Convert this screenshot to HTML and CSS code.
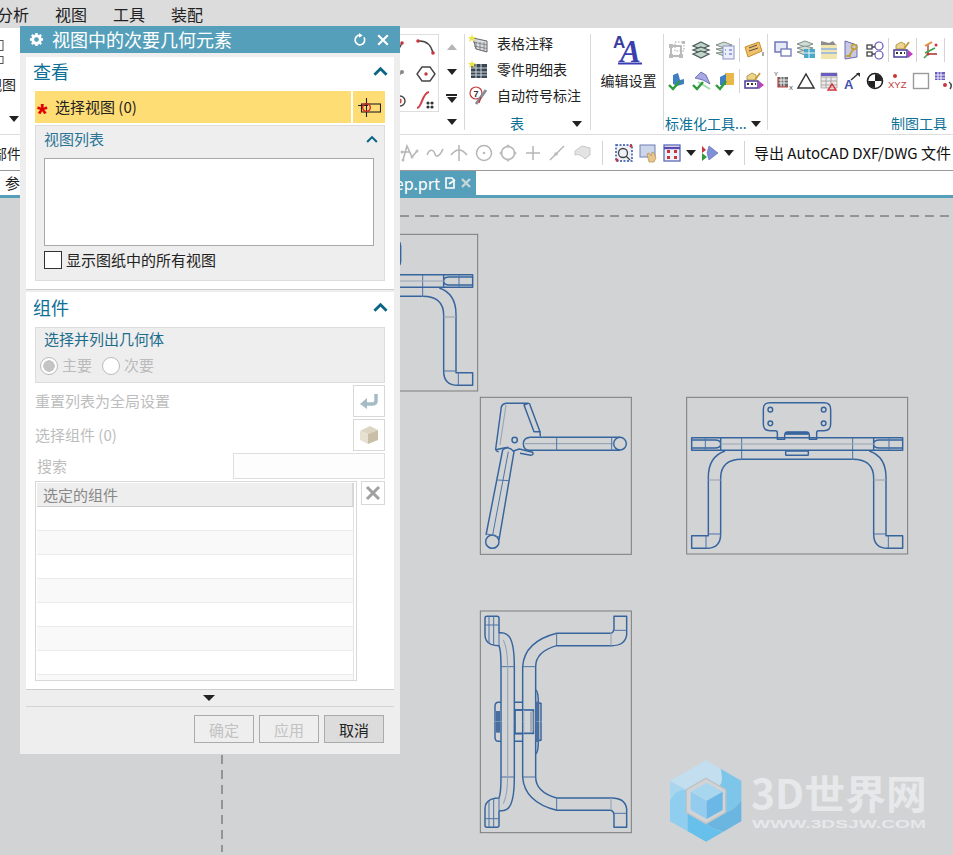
FILE: index.html
```html
<!DOCTYPE html>
<html lang="zh-CN">
<head>
<meta charset="utf-8">
<title>视图中的次要几何元素</title>
<link rel="stylesheet" href="styles.css">
</head>
<body>
<div class="app">
  <nav class="menubar">
    <span class="menu-item first">分析</span>
    <span class="menu-item">视图</span>
    <span class="menu-item">工具</span>
    <span class="menu-item">装配</span>
  </nav>

  <section class="ribbon">
    <div class="group g-left">
      <svg class="mini" viewBox="0 0 5 24"><rect x="-4" y=".5" width="7" height="10"/><rect x="-4" y="16.5" width="7" height="7"/></svg>
      <span class="mini-label">视图</span>
      <i class="caret caret-left"></i>
    </div>

    <div class="group g-sketch">
      <div class="sketch-box">
        <svg class="ic" viewBox="0 0 20 20"><path d="M2 17Q8 12 11 5" class="l-dark"/><circle cx="11" cy="5" r="1.8" class="f-red"/></svg>
        <svg class="ic" viewBox="0 0 20 20"><path d="M2 3Q14 2 17 15" class="l-dark"/><circle cx="2" cy="3" r="1.8" class="f-red"/><circle cx="17" cy="15" r="1.8" class="f-red"/></svg>
        <svg class="ic" viewBox="0 0 20 20"><path d="M5 15L11 8" class="l-gray"/><circle cx="5" cy="15" r="2" class="f-red"/><circle cx="11" cy="8" r="2" class="f-gray"/></svg>
        <svg class="ic" viewBox="0 0 20 20"><path d="M6 3H14L19 10 14 17H6L1 10Z" class="l-dark"/><circle cx="10" cy="10" r="1.7" class="f-red"/></svg>
        <svg class="ic" viewBox="0 0 20 20"><circle cx="9" cy="11" r="5" class="l-dark"/><circle cx="8" cy="11" r="2" class="l-red"/></svg>
        <svg class="ic" viewBox="0 0 20 20"><path d="M1 18C6 18 6 3 13 2" class="l-red2"/><g class="f-dark"><circle cx="12" cy="13" r="1.6"/><circle cx="16" cy="13" r="1.6"/><circle cx="12" cy="17" r="1.6"/><circle cx="16" cy="17" r="1.6"/></g></svg>
      </div>
      <div class="scroll-col">
        <i class="caret caret-up"></i>
        <i class="caret"></i>
        <span class="bar-caret"><b></b><i class="caret"></i></span>
        <i class="caret"></i>
      </div>
    </div>

    <div class="group g-table">
      <div class="list-row">
        <svg class="ic" viewBox="0 0 20 20"><path d="M5 4L19 7V18L8 15Z" class="grid-fill"/><path d="M8 7.5L8 15M12 8V16M16 8V17M5 8L19 11M6 12L19 14.500" class="l-thin"/><path d="M4 0L5 3 8 3 6 5 7 8 4 6 1 8 2 5 0 3 3 3Z" class="f-star"/></svg>
        <span>表格注释</span>
      </div>
      <div class="list-row">
        <svg class="ic" viewBox="0 0 20 20"><rect x="3" y="4" width="16" height="14" class="grid-dark"/><path d="M3 8H19M3 12H19M3 15H19M8 4V18M13 4V18" class="l-light"/><path d="M4 0L5 3 8 3 6 5 7 8 4 6 1 8 2 5 0 3 3 3Z" class="f-star"/></svg>
        <span>零件明细表</span>
      </div>
      <div class="list-row">
        <svg class="ic" viewBox="0 0 20 20"><circle cx="8" cy="7" r="6" class="l-redthin"/><text x="5.500" y="10.500" class="num">7</text><path d="M18 4L8 18" class="l-pen"/><path d="M13 11L11 17" class="l-redthin"/></svg>
        <span>自动符号标注</span>
      </div>
      <div class="group-label label-table"><span>表</span><i class="caret"></i></div>
    </div>

    <div class="group g-edit">
      <svg class="big-a" viewBox="0 0 32 30">
        <text x="0" y="12" class="big-a-s">A</text>
        <text x="7" y="26" class="big-a-l">A</text>
        <path d="M5 27.500H29" class="big-a-line"/>
      </svg>
      <span class="edit-label">编辑设置</span>
    </div>

    <div class="group g-std">
      <div class="icon-row">
        <svg class="ic" viewBox="0 0 20 20"><rect x="4" y="6" width="10" height="10" class="l-gray-2"/><rect x="8" y="2" width="9" height="9" class="l-gray-dash"/><g class="f-gray2"><rect x="2" y="4" width="4" height="4"/><rect x="12" y="14" width="4" height="4"/><rect x="15" y="1" width="3" height="3"/><rect x="2" y="14" width="4" height="4"/></g></svg>
        <svg class="ic" viewBox="0 0 20 20"><g class="stack"><path d="M10 2L18 6 10 9 2 6Z"/><path d="M10 7L18 10 10 13 2 10Z"/><path d="M10 11L18 14 10 18 2 14Z"/></g></svg>
        <svg class="ic" viewBox="0 0 20 20"><g class="stack2"><path d="M9 2L17 5 9 8 1 5Z"/><path d="M9 8L14 10 9 12 1 9Z"/><path d="M9 12L14 14 9 16 1 13Z"/></g><rect x="8" y="6" width="11" height="13" class="sheet"/><path d="M10 10H11M14 10H17M10 14H11M14 14H17" class="l-blue"/></svg>
        <i class="vsep"></i>
        <svg class="ic" viewBox="0 0 20 20"><path d="M1 7L15 2 18 11 4 17Z" class="tag"/><path d="M5 8L13 5M5 11L14 8" class="l-darkthin"/><path d="M19 12V16" class="l-darkthin"/></svg>
      </div>
      <div class="icon-row">
        <svg class="ic" viewBox="0 0 20 20"><path d="M6 4L11 2 13 9 17 8 17 13 10 15 6 13Z" class="f-blue"/><path d="M2 14L6 18 13 10" class="l-check"/></svg>
        <svg class="ic" viewBox="0 0 20 20"><path d="M4 7L10 1 15 4 19 13 12 9Z" class="f-lilac"/><path d="M7 11L19 18" class="l-mint"/><path d="M2 14L6 18 12 11" class="l-check"/></svg>
        <svg class="ic" viewBox="0 0 20 20"><rect x="10" y="2" width="9" height="12" class="f-gold"/><path d="M5 6L11 3V14L5 14Z" class="f-blue"/><path d="M1 14L5 18 11 10" class="l-check"/></svg>
        <i class="vsep"></i>
        <svg class="ic" viewBox="0 0 20 20"><path d="M3 5L8 2 12 4V9H3Z" class="f-cube"/><rect x="1" y="10" width="13" height="7" class="l-purple"/><path d="M3 13H5M7 13H9M11 13H12" class="l-dark2"/><path d="M15 10L20 14 15 18Z" class="f-magenta"/><path d="M11 9L16 2" class="l-pencil"/></svg>
      </div>
      <div class="group-label label-std"><span>标准化工具...</span><i class="caret"></i></div>
    </div>

    <div class="group g-draft">
      <div class="icon-row">
        <svg class="ic" viewBox="0 0 20 20"><rect x="2" y="2" width="12" height="10" class="win"/><rect x="8" y="9" width="10" height="7" class="win2"/></svg>
        <svg class="ic" viewBox="0 0 20 20"><g class="stack2"><path d="M9 1L17 4 9 7 1 4Z"/><path d="M9 6L17 8 9 11 1 8Z"/><path d="M9 10L17 12 9 15 1 12Z"/></g><rect x="8" y="9" width="11" height="9" class="f-cyan"/><path d="M8 13H19M13 9V18" class="l-white"/></svg>
        <svg class="ic" viewBox="0 0 20 20"><rect x="2" y="4" width="16" height="15" class="f-paleY"/><path d="M2 9H18M2 13H18" class="l-palebl"/><path d="M2 1L10 3 14 1 17 5H2Z" class="f-gray3"/></svg>
        <svg class="ic" viewBox="0 0 20 20"><path d="M3 1L15 5V17L3 19Z" class="f-lav"/><path d="M7 16L12 8" class="l-gold"/><circle cx="12" cy="7" r="2.500" class="l-gold2"/><path d="M4 16H9" class="l-gold"/></svg>
        <svg class="ic" viewBox="0 0 20 20"><rect x="2" y="5" width="5" height="4" class="l-dk"/><rect x="2" y="12" width="5" height="4" class="l-dk"/><path d="M7 7H11M7 14H11" class="l-dk"/><circle cx="14" cy="6" r="4" class="l-pur"/><circle cx="14" cy="15" r="4" class="l-pur"/></svg>
        <i class="vsep"></i>
        <svg class="ic" viewBox="0 0 20 20"><path d="M3 5L8 2 12 4V9H3Z" class="f-cube"/><rect x="1" y="10" width="13" height="7" class="l-purple"/><path d="M3 13H5M7 13H9M11 13H12" class="l-dark2"/><path d="M15 10L20 14 15 18Z" class="f-magenta"/><path d="M11 9L16 2" class="l-pencil"/></svg>
        <i class="vsep"></i>
        <svg class="ic" viewBox="0 0 20 20"><path d="M7 4V14H16" class="l-dkred"/><path d="M7 14L3 18" class="l-green"/><path d="M4 6L11 2" class="l-orange"/><path d="M4 13L14 8" class="l-green"/><circle cx="7" cy="14" r="1.500" class="f-red"/><circle cx="15" cy="5" r="1.500" class="f-red"/></svg>
        <i class="vsep"></i>
      </div>
      <div class="icon-row">
        <svg class="ic" viewBox="0 0 20 20"><rect x="5" y="6" width="10" height="10" class="f-gridk"/><path d="M5 9H15M5 12H15M8 6V16M11 6V16" class="l-white"/><path d="M5 6V16H15" class="l-redthin"/><text x="1" y="5" class="tiny">Y</text><text x="16" y="19" class="tiny">X</text></svg>
        <svg class="ic" viewBox="0 0 20 20"><path d="M10 3L18 17H2Z" class="l-dark3"/></svg>
        <svg class="ic" viewBox="0 0 20 20"><rect x="2" y="2" width="16" height="15" class="f-paleG"/><path d="M2 6H18M2 10H18M2 14H18M7 6V17M12 6V17" class="l-gr"/><rect x="2" y="2" width="16" height="3" class="f-pur"/><path d="M13 13L17 19H9Z" class="tri-red"/></svg>
        <svg class="ic" viewBox="0 0 20 20"><text x="2" y="18" class="a-blue">A</text><path d="M9 9L17 2" class="l-dark3"/><path d="M14 2H18V6Z" class="f-dark"/></svg>
        <svg class="ic" viewBox="0 0 20 20"><circle cx="10" cy="10" r="7.500" class="l-black"/><path d="M10 3A7 7 0 0 1 17 10H10Z M10 10H3A7 7 0 0 0 10 17Z" class="f-black"/></svg>
        <svg class="ic" viewBox="0 0 20 20"><circle cx="7" cy="5" r="2" class="f-red"/><text x="0" y="17" class="xyz">XYZ</text></svg>
        <svg class="ic" viewBox="0 0 20 20"><rect x="2.500" y="2.500" width="15" height="15" class="l-box"/></svg>
        <svg class="ic" viewBox="0 0 20 20"><rect x="1" y="1" width="10" height="8" class="f-pur"/><path d="M1 4H11M1 7H11M4 1V9M7 1V9" class="l-white"/><circle cx="11" cy="14" r="2" class="f-red"/><path d="M15 11Q19 14 16 18" class="l-dark"/></svg>
      </div>
      <div class="group-label label-draft"><span>制图工具</span></div>
    </div>
  </section>

  <section class="toolbar">
    <div class="tool-left"><span>部件</span></div>
    <svg class="ic tool" viewBox="0 0 20 20"><path d="M3 17L7 3 12 14 17 8" class="l-tool"/><path d="M2 9H10" class="l-tool"/><g class="f-tool"><circle cx="3" cy="17" r="1.500"/><circle cx="12" cy="14" r="1.500"/><circle cx="17" cy="8" r="1.500"/><circle cx="2" cy="9" r="1.500"/></g></svg>
    <svg class="ic tool" viewBox="0 0 20 20"><path d="M2 12C5 5 9 7 10 11S15 13 18 6" class="l-tool"/></svg>
    <svg class="ic tool" viewBox="0 0 20 20"><path d="M10 2V18M2 12Q10 2 18 12" class="l-tool"/></svg>
    <svg class="ic tool" viewBox="0 0 20 20"><circle cx="10" cy="10" r="7.500" class="l-tool"/><circle cx="10" cy="10" r="1.300" class="f-tool"/></svg>
    <svg class="ic tool" viewBox="0 0 20 20"><circle cx="10" cy="10" r="6.500" class="l-tool"/><g class="f-tool"><circle cx="10" cy="3" r="1.500"/><circle cx="10" cy="17" r="1.500"/><circle cx="3" cy="10" r="1.500"/><circle cx="17" cy="10" r="1.500"/></g></svg>
    <svg class="ic tool" viewBox="0 0 20 20"><path d="M10 3V17M3 10H17" class="l-tool"/></svg>
    <svg class="ic tool" viewBox="0 0 20 20"><path d="M3 17L17 3" class="l-tool"/><circle cx="9" cy="11" r="1.800" class="f-tool"/></svg>
    <svg class="ic tool" viewBox="0 0 20 20"><path d="M3 8L10 3 18 5V12L13 16Q8 10 3 12Z" class="f-shade"/></svg>
    <i class="vsep tall"></i>
    <svg class="ic tool-c first" viewBox="0 0 20 20"><rect x="2" y="2" width="16" height="16" class="l-bluedash"/><circle cx="9" cy="10" r="4.500" class="l-dk"/><path d="M12 13L16 17" class="l-dk"/><circle cx="17" cy="3" r="1.500" class="f-red"/><circle cx="3" cy="17" r="1.500" class="f-red"/></svg>
    <svg class="ic tool-c" viewBox="0 0 20 20"><rect x="2" y="2" width="15" height="12" class="f-panel"/><path d="M11 19L9 11 11 10 13 13 14 9 16 10 18 15 16 19Z" class="f-hand"/></svg>
    <svg class="ic tool-c" viewBox="0 0 20 20"><rect x="2" y="2" width="16" height="16" class="win3"/><path d="M2 5H18" class="l-pur2"/><g class="f-red"><rect x="5" y="7" width="3" height="3"/><rect x="12" y="7" width="3" height="3"/><rect x="5" y="13" width="3" height="3"/><rect x="12" y="13" width="3" height="3"/></g></svg>
    <i class="caret tool-caret"></i>
    <svg class="ic tool-c" viewBox="0 0 20 20"><path d="M9 3L18 10 9 17 7 10Z" class="f-lilac2"/><path d="M2 3V10L6 7Z" class="f-red"/><path d="M2 10V18L7 14Z" class="f-green"/></svg>
    <i class="caret tool-caret"></i>
    <i class="vsep tall"></i>
    <span class="export">导出 AutoCAD DXF/DWG 文件</span>
  </section>

  <section class="tabs">
    <div class="tab-left">参</div>
    <div class="tab">
      <span class="tab-name">ep.prt</span>
      <svg class="tab-ic" viewBox="0 0 12 12"><path d="M2 1H8L10 3V11H2Z" class="tab-page"/><path d="M5 7L11 3" class="tab-pen"/></svg>
      <svg class="tab-ic" viewBox="0 0 12 12"><path d="M2 2L10 10M10 2L2 10" class="tab-x"/></svg>
    </div>
  </section>

  <main class="canvas">
    <svg class="sheet-svg" viewBox="0 198 953 657">
      <defs>
        <g id="arm">
          <path class="ln" d="M135 183Q85 200 85 262V437H35V475H80Q122 475 122 432V265Q122 208 185 208"/>
          <path class="ln-thin" d="M78 437V475M85 432H122"/>
          <path class="ln-gray" d="M85 270H122"/>
          <path class="ln" d="M35 143H122V181H35ZM35 150H105Q122 150 122 162 122 174 105 174H35"/>
          <path class="ln-thin" d="M76 143V181M185 143V208"/>
        </g>
        <g id="front">
          <rect class="frame3" x="20" y="22" width="663" height="470"/>
          <use href="#arm"/>
          <use href="#arm" transform="translate(703 0) scale(-1 1)"/>
          <path class="ln" d="M122 143H581M122 181H581M185 208H517"/>
          <path class="ln-gray" d="M122 162H581"/>
          <path class="ln" d="M270 38H432Q452 38 452 58V102Q452 122 432 122H416Q410 122 410 128V148H388V136Q388 126 378 126H324Q314 126 314 136V148H292V128Q292 122 286 122H270Q250 122 250 102V58Q250 38 270 38Z"/>
          <path class="ln-bold" d="M316 130H386"/>
          <rect class="ln" x="317" y="183" width="68" height="13" rx="2"/>
          <g class="ln">
            <circle cx="271" cy="59" r="7"/><circle cx="431" cy="59" r="7"/>
            <circle cx="271" cy="100" r="7"/><circle cx="431" cy="100" r="7"/>
          </g>
        </g>
        <g id="top-half">
          <path class="ln" d="M143 350V185Q148 110 245 85H405Q415 85 417 72V34H455V90Q450 122 410 122H245Q182 140 182 185V350"/>
          <path class="ln-thin" d="M245 85V122M143 185H182M417 76H455"/>
          <path class="ln-gray" d="M408 85V122"/>
          <path class="ln" d="M118 350V185Q118 100 95 88 85 82 72 84M78 350V185Q78 135 72 122 60 122 48 118 30 110 30 90V40Q30 34 36 34H66Q72 34 72 40V84"/>
          <path class="ln-thin" d="M78 185H118M30 60H72M42 34V115M56 34V120M72 84V122"/>
          <path class="ln-gray" d="M98 350V190Q98 130 85 105"/>
          <path class="ln" d="M60 350V305Q60 292 70 292H78M118 292H143M118 315H143"/>
          <path class="ln-shade" d="M69 318V350"/>
          <path class="ln" d="M183 255Q190 260 190 295H198V350"/>
          <path class="ln-shade" d="M187 290V350"/>
        </g>
      </defs>

      <path class="dash" d="M400 216H953"/>
      <path class="dash" d="M222 755V852"/>

      <!-- view behind the dialog, same projection as the front view -->
      <use href="#front" transform="translate(250 227) scale(.33333)"/>

      <!-- front view -->
      <use href="#front" transform="translate(680 390) scale(.33333)"/>

      <!-- side view -->
      <g transform="translate(400 225) scale(.33333)">
        <rect class="frame3" x="241" y="517" width="453" height="471"/>
        <path class="ln" d="M420 637H390Q370 640 370 656 370 676 390 676H660M390 637H660"/>
        <circle class="ln" cx="660" cy="656" r="19"/>
        <path class="ln-gray" d="M375 656H640"/>
        <path class="ln-thin" d="M470 637V676M635 637V676"/>
        <path class="ln" d="M318 535H385L372 540 402 620H420L388 535M318 535Q307 536 304 546L287 672Q288 679 296 680M420 620L421 634"/>
        <path class="ln-gray" d="M318 540L300 660"/>
        <path class="ln" d="M287 674Q310 670 325 667M340 678L358 672 398 682Q402 690 392 691L360 685"/>
        <circle class="ln" cx="344" cy="645" r="8"/>
        <path class="ln" d="M308 675Q325 660 342 680L297 945M308 675L258 930"/>
        <circle class="ln" cx="277" cy="950" r="20"/>
        <path class="ln-thin" d="M292 765L328 767M325 680L278 930M258 926L297 936"/>
      </g>

      <!-- top view -->
      <g transform="translate(475 605) scale(.33333)">
        <rect class="frame3" x="16" y="18" width="453" height="665"/>
        <use href="#top-half"/>
        <use href="#top-half" transform="translate(0 701) scale(1 -1)"/>
        <rect class="ln-mid" x="120" y="315" width="55" height="70"/>
        <rect class="shade-block" x="165" y="320" width="10" height="60"/>
        <path class="ln-gray" d="M146 315V385"/>
      </g>

      <!-- watermark logo -->
      <g transform="translate(660 750) scale(.33333)">
        <g class="blades">
          <path class="b1" d="M30 92L138 31 182 56Q192 100 176 108L138 85 79 119Q50 105 30 92Z"/>
          <path class="b2" d="M182 56L244 92V150Q225 180 197 187V119L176 108Q192 100 182 56Z"/>
          <path class="b3" d="M244 150V214L190 245Q150 235 138 221L197 187Q225 180 244 150Z"/>
          <path class="b4" d="M190 245L138 275 82 243V190L138 221Q150 235 190 245Z"/>
          <path class="b5" d="M82 243L30 214V150Q50 115 79 119V187L82 190Z"/>
          <path class="b6" d="M30 150V92Q50 105 79 119 50 115 30 150Z"/>
        </g>
        <path class="ring" d="M138 85L197 119V187L138 221 79 187V119Z"/>
        <path class="c-top" d="M140 98L188 125 140 152 92 125Z"/>
        <path class="c-left" d="M92 125L140 152V207L92 180Z"/>
        <path class="c-right" d="M188 125L140 152V207L188 180Z"/>
      </g>
      <text class="logo-main" x="751" y="809" textLength="176" lengthAdjust="spacingAndGlyphs">3D世界网</text>
      <text class="logo-sub" x="752" y="828" textLength="174" lengthAdjust="spacingAndGlyphs">WWW.3DSJW.COM</text>
    </svg>
  </main>

  <aside class="dialog">
    <header class="dlg-title">
      <svg class="dlg-gear" viewBox="0 0 16 16"><circle cx="8" cy="8" r="4" class="gear-c"/><path d="M8 1V3.500M8 12.500V15M1 8H3.500M12.500 8H15M3 3L4.800 4.800M11.200 11.200L13 13M13 3L11.200 4.800M4.800 11.200L3 13" class="gear-t"/></svg>
      <span class="dlg-name">视图中的次要几何元素</span>
      <svg class="dlg-btn" viewBox="0 0 16 16"><path d="M12.500 5A5.500 5.500 0 1 1 8 2.500" class="t-stroke"/><path d="M7 0L11 2.800 7 5.500Z" class="t-fill"/></svg>
      <svg class="dlg-btn" viewBox="0 0 16 16"><path d="M2.500 2.500L13.500 13.500M13.500 2.500L2.500 13.500" class="t-stroke2"/></svg>
    </header>

    <div class="dlg-section sec-view">
      <div class="sec-head">
        <span>查看</span>
        <svg class="chev" viewBox="0 0 16 10"><path d="M1.500 9L8 2.500 14.500 9" /></svg>
      </div>
      <div class="select-row">
        <div class="select-main"><span class="req">*</span><span class="select-text">选择视图 (0)</span></div>
        <button class="select-btn" type="button" aria-label="选择视图">
          <svg viewBox="0 0 24 24"><rect x="4.500" y="9" width="19" height="8" class="sv-rect"/><path d="M1 10.500H11M9.500 3V22" class="sv-rect"/><circle cx="9.500" cy="12.500" r="3.800" class="sv-red"/></svg>
        </button>
      </div>
      <div class="subpanel">
        <div class="sub-head">
          <span>视图列表</span>
          <svg class="chev small" viewBox="0 0 16 10"><path d="M1.500 9L8 2.500 14.500 9" /></svg>
        </div>
        <div class="listbox"></div>
        <label class="check-row"><span class="checkbox"></span><span class="check-text">显示图纸中的所有视图</span></label>
      </div>
    </div>

    <div class="dlg-section sec-comp">
      <div class="sec-head head2">
        <span>组件</span>
        <svg class="chev" viewBox="0 0 16 10"><path d="M1.500 9L8 2.500 14.500 9" /></svg>
      </div>
      <div class="radio-panel">
        <div class="radio-title">选择并列出几何体</div>
        <div class="radio-row">
          <span class="radio on"></span><span class="radio-text">主要</span>
          <span class="radio"></span><span class="radio-text">次要</span>
        </div>
      </div>
      <div class="field-row">
        <span class="dim">重置列表为全局设置</span>
        <span class="square-btn">
          <svg viewBox="0 0 20 20"><path d="M17 3V10Q17 13 13 13H7" class="undo"/><path d="M8 7V18L1 13Z" class="undo-f"/></svg>
        </span>
      </div>
      <div class="field-row">
        <span class="dim">选择组件 (0)</span>
        <span class="square-btn">
          <svg viewBox="0 0 20 20"><path d="M1 6L11 1 19 5 9 9Z" class="cube-t"/><path d="M1 6L9 9V19L1 15Z" class="cube-l"/><path d="M9 9L19 5V15L9 19Z" class="cube-r"/></svg>
        </span>
      </div>
      <div class="search-row">
        <span class="dim search-label">搜索</span>
        <span class="search-input"></span>
      </div>
      <div class="table-row">
        <div class="sel-table">
          <div class="sel-head">选定的组件</div>
          <div class="sel-row"></div>
          <div class="sel-row"></div>
          <div class="sel-row"></div>
          <div class="sel-row"></div>
          <div class="sel-row"></div>
          <div class="sel-row"></div>
          <div class="sel-row"></div>
          <div class="sel-row"></div>
        </div>
        <span class="del-btn">
          <svg viewBox="0 0 16 16"><path d="M2 2L14 14M14 2L2 14" class="del-x"/></svg>
        </span>
      </div>
    </div>

    <div class="expand"><i class="caret caret-wide"></i></div>
    <footer class="dlg-foot">
      <button class="btn" type="button" disabled>确定</button>
      <button class="btn" type="button" disabled>应用</button>
      <button class="btn primary" type="button">取消</button>
    </footer>
  </aside>
</div>
</body>
</html>
```
FILE: styles.css
```css
* { box-sizing: border-box; }
html, body { margin: 0; padding: 0; }
body {
  width: 953px;
  height: 855px;
  overflow: hidden;
  background: #d2d3d5;
  font-family: "Noto Sans CJK SC", "Liberation Sans", sans-serif;
  color: #222;
}
.app { position: relative; width: 953px; height: 855px; overflow: hidden; }
i { display: block; }

/* menu */
.menubar { height: 28px; background: #dcdcdc; display: flex; align-items: center; gap: 26px; font-size: 16px; line-height: 28px; color: #222; }
.menu-item.first { margin-left: -3px; }

/* shared */
.caret { width: 0; height: 0; border-left: 5.5px solid transparent; border-right: 5.5px solid transparent; border-top: 6px solid #222; }
.caret-up { border-top: 0; border-bottom: 6px solid #b5b5b5; }
.ic { width: 20px; height: 20px; display: block; flex: none; fill: none; overflow: hidden; }
.vsep { width: 1px; height: 26px; background: #d4d4d4; flex: none; }

/* ribbon */
.ribbon { height: 107px; background: #fff; border-bottom: 1px solid #ddd; padding: 6px 0 5px; display: flex; font-size: 14px; line-height: 20px; white-space: nowrap; }
.group { height: 96px; border-right: 1px solid #d8d8d8; display: flex; flex-direction: column; flex: none; position: relative; }
.g-left { width: 380px; border-right: 0; }
.mini { width: 5px; height: 24px; margin-top: 6px; fill: none; stroke: #555; }
.mini-label { margin: 10px 0 0 -12px; line-height: 20px; }
.caret-left { margin: 22px 0 0 9px; }
.g-sketch { width: 85px; flex-direction: row; }
.sketch-box { width: 59px; height: 78px; border: 1px solid #ddd; border-width: 1px 1px 1px 0; display: grid; grid-template-columns: 25px 25px; grid-auto-rows: 26px; justify-content: end; justify-items: center; align-items: center; margin-top: 0; }
.scroll-col { width: 25px; display: flex; flex-direction: column; align-items: center; padding-top: 10px; }
.scroll-col > .caret:nth-child(2) { margin-top: 19px; }
.bar-caret { display: flex; flex-direction: column; align-items: center; margin-top: 19px; gap: 1px; }
.bar-caret b { width: 11px; height: 2px; background: #222; }
.scroll-col > .caret:last-child { margin-top: 16px; }
.g-table { width: 126px; padding: 0 0 0 3px; }
.list-row { display: flex; align-items: center; gap: 9px; height: 20px; margin-bottom: 6px; color: #222; }
.list-row span { padding-bottom: 2px; }
.group-label { margin-top: auto; height: 13px; line-height: 13px; display: flex; align-items: center; color: #0d7096; font-size: 14px; }
.label-table { padding-left: 42px; }
.label-table .caret { margin-left: auto; margin-right: 8px; }
.g-edit { width: 73px; align-items: center; padding: 2px 0 0 3px; }
.big-a { width: 32px; height: 30px; display: block; overflow: visible; }
.edit-label { margin-top: 4px; }
.g-std { width: 104px; padding-top: 6px; }
.icon-row { display: flex; align-items: center; height: 20px; margin-bottom: 11px; }
.icon-row .ic { width: 20px; margin: 0 2px; }
.icon-row .vsep { margin: 0 2px; height: 24px; }
.g-std .icon-row { padding-left: 1px; }
.label-std { padding-left: 1px; }
.label-std .caret { margin-left: 4px; }
.g-draft { flex: 1 1 auto; border-right: 0; padding: 6px 0 0 3px; overflow: hidden; }
.g-draft .icon-row .ic { margin: 0 1.5px; }
.label-draft { padding-left: 120px; }

/* svg icon palette */
.l-dark { stroke: #444; stroke-width: 1.4; fill: none; }
.l-gray { stroke: #999; stroke-width: 1.6; fill: none; }
.l-red { stroke: #c33; stroke-width: 1.3; fill: none; }
.l-red2 { stroke: #d0424a; stroke-width: 2; fill: none; }
.l-redthin { stroke: #c03a3a; stroke-width: 1.2; fill: none; }
.l-thin { stroke: #777; stroke-width: .8; fill: none; }
.l-light { stroke: #ccd6de; stroke-width: 1; fill: none; }
.l-blue { stroke: #4a5fb5; stroke-width: 1.2; }
.l-pen { stroke: #8a8a98; stroke-width: 3; }
.l-gray-2 { stroke: #aaa; stroke-width: 1.6; fill: none; }
.l-gray-dash { stroke: #aaa; stroke-width: 1; stroke-dasharray: 1.5 1.5; fill: none; }
.l-darkthin { stroke: #444; stroke-width: .9; }
.l-check { stroke: #2f9a3a; stroke-width: 2.4; fill: none; }
.l-mint { stroke: #9fdcae; stroke-width: 2; }
.l-purple { stroke: #4a3c9c; stroke-width: 1.5; fill: #fff; }
.l-dark2 { stroke: #333; stroke-width: 2; }
.l-pencil { stroke: #c49a3a; stroke-width: 1.8; }
.l-white { stroke: #fff; stroke-width: .9; fill: none; }
.l-palebl { stroke: #a8bfd8; stroke-width: 2; }
.l-gold { stroke: #c4a12c; stroke-width: 1.8; }
.l-gold2 { stroke: #c4a12c; stroke-width: 1.6; fill: none; }
.l-dk { stroke: #444; stroke-width: 1.3; fill: none; }
.l-pur { stroke: #6355b8; stroke-width: 1.2; fill: #fff; }
.l-dkred { stroke: #a5322e; stroke-width: 1.3; fill: none; }
.l-green { stroke: #3da54a; stroke-width: 1.6; }
.l-orange { stroke: #e68a3e; stroke-width: 2; }
.l-dark3 { stroke: #333; stroke-width: 1.5; fill: none; }
.l-gr { stroke: #9b9b9b; stroke-width: .8; }
.l-black { stroke: #222; stroke-width: 1.6; fill: #fff; }
.l-box { stroke: #9a9a9a; stroke-width: 1.4; fill: #fff; }
.l-tool { stroke: #b5b5b5; stroke-width: 1.5; fill: none; }
.l-bluedash { stroke: #2a4fa8; stroke-width: 1.4; stroke-dasharray: 2 1.5; fill: #eef1f7; }
.l-pur2 { stroke: #5b4bb0; stroke-width: 2.4; }
.f-red { fill: #c8353a; }
.f-gray { fill: #888; }
.f-dark { fill: #333; }
.f-star { fill: #e9e34d; }
.f-gray2 { fill: #bbb; }
.f-blue { fill: #3f7fc4; }
.f-lilac { fill: #a9a8e6; stroke: #5a5aa8; stroke-width: .8; }
.f-gold { fill: #e8b949; }
.f-cube { fill: #ecd48c; stroke: #a78c3c; stroke-width: .8; }
.f-magenta { fill: #c040c0; }
.f-cyan { fill: #4aa8c8; }
.f-paleY { fill: #f2e6b0; }
.f-gray3 { fill: #8c8c8c; }
.f-lav { fill: #c8c8e8; stroke: #6c6caa; stroke-width: 1; }
.f-gridk { fill: #6a6a6a; }
.f-paleG { fill: #efe9e9; stroke: #888; stroke-width: .6; }
.f-pur { fill: #6a5cc0; }
.f-black { fill: #222; }
.f-tool { fill: #bcbcbc; }
.f-shade { fill: #e3e3e3; stroke: #c8c8c8; }
.f-panel { fill: #cdd5ea; stroke: #6f7fb5; }
.f-hand { fill: #e6c68c; stroke: #b28f55; stroke-width: .7; }
.f-lilac2 { fill: #7f8fd8; stroke: #5a66b0; stroke-width: .6; }
.f-green { fill: #2f9a3a; }
.grid-fill { fill: #d8dde3; stroke: #666; stroke-width: 1; }
.grid-dark { fill: #3a4752; }
.num { font: 700 9px "Liberation Sans", sans-serif; fill: #333; }
.tag { fill: #efc06a; stroke: #c98d2e; stroke-width: 1; }
.stack path { fill: #c0d4c8; stroke: #4a5a5a; stroke-width: 1.2; }
.stack2 path { fill: #cfdcd4; stroke: #7e9088; stroke-width: 1; }
.sheet { fill: #eceef9; stroke: #8a93c8; stroke-width: 1; }
.win { fill: #e6eaf6; stroke: #6f78b8; stroke-width: 1.5; }
.win2 { fill: #fff; stroke: #6f78b8; stroke-width: 1.3; }
.win3 { fill: #eef0fa; stroke: #5b6bb8; stroke-width: 1.3; }
.tri-red { fill: none; stroke: #d8323a; stroke-width: 1.4; }
.tiny { font: 6px "Liberation Sans", sans-serif; fill: #333; }
.a-blue { font: 700 13px "Liberation Sans", sans-serif; fill: #4350b0; }
.xyz { font: 9.500px "Liberation Sans", sans-serif; fill: #c23a3a; }
.big-a-s { font: 700 17px "Liberation Sans", sans-serif; fill: #3a3d9c; }
.big-a-l { font: italic 700 31px "Liberation Serif", serif; fill: #3a3fb0; }
.big-a-line { stroke: #3a3fb0; stroke-width: 2; }

/* toolbar */
.toolbar { height: 35px; background: #fff; display: flex; align-items: center; font-size: 14px; white-space: nowrap; overflow: hidden; }
.tool-left { width: 401px; flex: none; margin-left: -1px; }
.tool-left span { margin-left: -6px; display: block; }
.tool { margin-right: 4.500px; }
.toolbar .vsep.tall { height: 24px; margin: 0 9px 0 6px; }
.tool-c.first { margin-left: 2px; }
.tool-c { margin-right: 4px; }
.tool-caret { margin: 0 4px 0 0; }
.export { font-size: 15px; color: #111; padding-bottom: 1px; }

/* tabs */
.tabs { height: 28px; border-top: 1px solid #999; border-bottom: 3px solid #559fba; background: #fff; display: flex; font-size: 15px; line-height: 24px; }
.tab-left { width: 380px; padding-left: 5px; flex: none; }
.tab { width: 96px; background: #559fba; color: #fff; display: flex; align-items: center; justify-content: flex-end; padding-right: 4px; gap: 4px; font-size: 16px; }
.tab-ic { width: 12px; height: 12px; display: block; flex: none; }
.tab-page { fill: none; stroke: #fff; stroke-width: 1.6; }
.tab-pen { stroke: #fff; stroke-width: 1.8; }
.tab-x { stroke: #c5d5dc; stroke-width: 2.4; }

/* sheet canvas */
.canvas { height: 657px; background: #d2d3d5; }
.sheet-svg { display: block; width: 953px; height: 657px; }
.dash { stroke: #555; stroke-width: 1; stroke-dasharray: 9 6; fill: none; }
.frame3 { fill: none; stroke: #7c7c7c; stroke-width: 3; }
.ln { fill: none; stroke: #36659e; stroke-width: 4.400; stroke-linejoin: round; }
.ln-thin { fill: none; stroke: #4a74a8; stroke-width: 3; }
.ln-gray { fill: none; stroke: #98a6b8; stroke-width: 3.400; }
.ln-bold { fill: none; stroke: #36659e; stroke-width: 9; }
.ln-shade { fill: none; stroke: #4a6f9f; stroke-width: 12; }
.ln-mid { fill: none; stroke: #36659e; stroke-width: 5; }
.shade-block { fill: #a6adb6; }
.b1 { fill: #c3deee; }
.b2 { fill: #7dc6ea; }
.b3 { fill: #6bb6e0; }
.b4 { fill: #67bfeb; }
.b5 { fill: #8fceef; }
.b6 { fill: #a9d6ef; }
.ring { fill: #d2d3d5; stroke: #bfc2c6; stroke-width: 4; }
.c-top { fill: #a9d6ef; }
.c-left { fill: #93ccee; }
.c-right { fill: #6bb8e6; }
.logo-main { font: 700 40px "Noto Sans CJK SC", "Liberation Sans", sans-serif; fill: #e6e8ea; }
.logo-sub { font: 700 11.500px "Liberation Sans", sans-serif; fill: #e6e8ea; }

/* dialog */
.dialog { position: absolute; left: 20px; top: 26px; width: 380px; height: 728px; background: #eee; display: flex; flex-direction: column; }
.dlg-title { height: 27px; background: #559fba; color: #fff; display: flex; align-items: center; padding: 0 10px 0 9px; font-size: 18px; flex: none; }
.dlg-gear { width: 15px; height: 15px; display: block; margin-right: 8px; flex: none; }
.gear-c { fill: none; stroke: #fff; stroke-width: 3; }
.gear-t { stroke: #fff; stroke-width: 2.6; }
.dlg-name { flex: 1; line-height: 27px; }
.dlg-btn { width: 14px; height: 14px; margin-left: 9px; display: block; flex: none; }
.t-stroke { fill: none; stroke: #fff; stroke-width: 2; }
.t-fill { fill: #fff; }
.t-stroke2 { stroke: #fff; stroke-width: 2.4; }

.dlg-section { background: #fff; margin: 0 6px; padding: 0 9px; border-bottom: 1px solid #cdcdcd; flex: none; }
.sec-view { margin-top: 4px; height: 233px; }
.sec-comp { margin-top: 2px; height: 398px; }
.sec-head { height: 34px; display: flex; align-items: center; justify-content: space-between; font-size: 18px; color: #0d7096; padding: 0 0 7px 0; margin: 0 -3px 0 -2px; }
.head2 { height: 35px; padding-bottom: 6px; }
.chev { width: 15px; height: 10px; display: block; fill: none; stroke: #0b6584; stroke-width: 3; }
.chev.small { width: 12px; height: 8px; stroke-width: 2.8; margin-right: -4px; }

.select-row { display: flex; gap: 2px; height: 32px; }
.select-main { flex: 1; background: #ffdd75; display: flex; align-items: center; font-size: 15px; color: #222; padding-left: 2px; gap: 5px; }
.select-text { padding-bottom: 2px; }
.req { color: #e00000; font-size: 27px; font-weight: 700; line-height: 46px; height: 32px; width: 13px; font-family: "Liberation Sans", sans-serif; overflow: visible; }
.select-btn { width: 32px; height: 32px; background: #ffdd75; border: 0; padding: 4px; display: block; }
.select-btn svg { width: 24px; height: 24px; display: block; fill: none; }
.sv-rect { fill: none; stroke: #222; stroke-width: 1.1; }
.sv-red { fill: none; stroke: #d8232a; stroke-width: 1.4; }

.subpanel { margin-top: 2px; height: 156px; background: #eee; border: 1px solid #dcdcdc; padding: 0 10px 0 8px; }
.sub-head { height: 32px; display: flex; align-items: center; justify-content: space-between; font-size: 15px; color: #2a7596; padding: 0 0 7px 0; }
.listbox { height: 88px; background: #fff; border: 1px solid #a8a8a8; }
.check-row { display: flex; align-items: center; gap: 4px; margin-top: 5px; font-size: 15px; color: #222; height: 18px; }
.check-text { padding-bottom: 2px; }
.checkbox { width: 18px; height: 18px; background: #fff; border: 1px solid #333; flex: none; }

.radio-panel { height: 56px; background: #eee; border: 1px solid #dcdcdc; }
.radio-title { font-size: 15px; color: #1d6d8c; padding: 0 0 0 8px; line-height: 22px; }
.radio-row { display: flex; align-items: center; padding-left: 4px; margin-top: 6px; font-size: 15px; color: #bbb; height: 20px; }
.radio { width: 18px; height: 18px; border-radius: 50%; border: 1px solid #bbb; background: #fff; flex: none; position: relative; }
.radio.on { background: radial-gradient(circle, #c4c4c4 0 5.500px, #fff 6px); }
.radio-text { margin: 0 10px 3px 4px; }

.field-row { display: flex; align-items: center; justify-content: space-between; height: 32px; margin-top: 2px; }
.dim { color: #bdbdbd; font-size: 15px; padding-bottom: 2px; }
.square-btn { width: 32px; height: 32px; border: 1px solid #d8d8d8; background: #fff; display: flex; align-items: center; justify-content: center; }
.square-btn svg { width: 20px; height: 20px; display: block; }
.undo { fill: none; stroke: #a6bcc4; stroke-width: 3.5; }
.undo-f { fill: #a6bcc4; }
.cube-t { fill: #dcd5c2; }
.cube-l { fill: #e6e0d0; }
.cube-r { fill: #c8bfa6; }
.search-row { display: flex; align-items: center; justify-content: space-between; height: 26px; margin-top: 2px; }
.search-label { margin-left: 2px; }
.search-input { width: 152px; height: 26px; border: 1px solid #dedede; background: #fdfdfd; }
.table-row { display: flex; justify-content: space-between; align-items: flex-start; margin-top: 2px; height: 200px; }
.sel-table { width: 322px; height: 200px; border: 1px solid #d8d8d8; padding: 1px 2px 0 1px; overflow: hidden; background: #fff; }
.sel-head { height: 24px; background: #eee; border-bottom: 1px solid #d0d0d0; border-right: 2px solid #d8d8d8; padding-left: 6px; font-size: 15px; line-height: 23px; color: #888; }
.sel-row { height: 24px; border-bottom: 1px solid #ececec; border-right: 1px solid #e4e4e4; }
.sel-row:nth-child(odd) { background: #f9f9f9; }
.del-btn { width: 24px; height: 24px; border: 1px solid #d8d8d8; background: #fff; display: flex; align-items: center; justify-content: center; }
.del-btn svg { width: 16px; height: 16px; display: block; }
.del-x { stroke: #a0a0a0; stroke-width: 3; }

.expand { height: 17px; margin: 0 6px; border-bottom: 1px solid #d4d4d4; display: flex; justify-content: center; align-items: center; flex: none; }
.caret-wide { border-left-width: 6px; border-right-width: 6px; margin-right: 2px; }
.dlg-foot { display: flex; justify-content: flex-end; gap: 5px; padding: 8px 16px 0 0; }
.btn { width: 60px; height: 28px; border: 1px solid #ababab; background: #eee; font: 15px "Noto Sans CJK SC", "Liberation Sans", sans-serif; color: #c2c2c2; padding: 0; }
.btn.primary { background: #dcdcdc; color: #222; }
```
